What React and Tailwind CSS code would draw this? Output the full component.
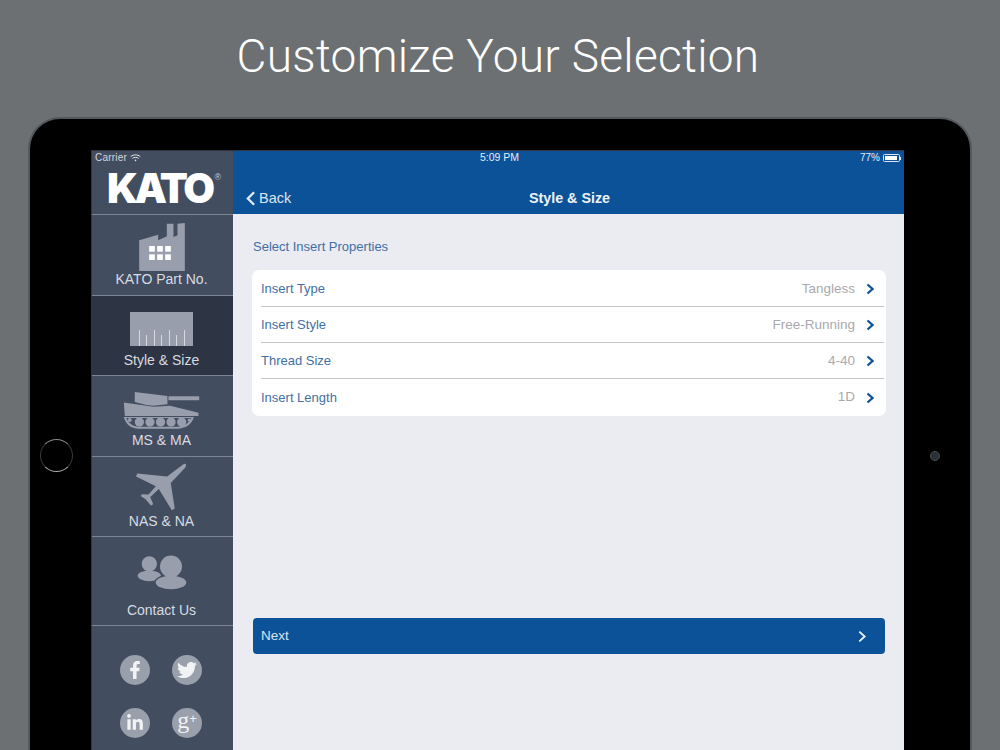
import React from "react";
import { FaFacebookF, FaTwitter, FaLinkedinIn } from "react-icons/fa";

const sans = "font-['Liberation_Sans',Arial,sans-serif]";

const FactoryIcon = () => (
  <svg width="46" height="48" viewBox="415 368 137 144" className="block">
    <path d="M415 512V420L472 403V420L498 408V370H518V410L530 405V370L552 368V512Z" fill="#989eac" />
    <g fill="#ffffff">
      <rect x="445" y="437" width="17" height="17" />
      <rect x="469" y="437" width="17" height="17" />
      <rect x="493" y="437" width="17" height="17" />
      <rect x="445" y="462" width="17" height="17" />
      <rect x="469" y="462" width="17" height="17" />
      <rect x="493" y="462" width="17" height="17" />
    </g>
  </svg>
);

const RulerIcon = () => (
  <svg width="63" height="34" viewBox="0 0 63 34" className="block">
    <rect width="63" height="34" fill="#989eac" />
    <g stroke="#d5d8de" strokeWidth="1">
      <path d="M9.5 34V18M16.5 34V23M24.5 34V18M31.5 34V23M39.5 34V18M46.5 34V23M54.5 34V18" />
    </g>
  </svg>
);

const TankIcon = () => (
  <svg width="77" height="39" viewBox="98 300 232 118" className="block">
    <g fill="#989eac">
      <path d="M133 303L232 315V340L190 345L168 342L133 333Z" />
      <rect x="235" y="316" width="93" height="12" />
      <path d="M100 335L190 348L240 345L326 366V376H103Z" />
      <path d="M100 379H312C306 402 285 414 262 414H145C122 414 106 402 100 379Z" />
    </g>
    <path d="M108 382H304C298 398 280 408 262 408H145C127 408 114 398 108 382Z" fill="#424d60" />
    <g fill="#989eac">
      <circle cx="118" cy="388" r="6" />
      <circle cx="147" cy="394" r="14" />
      <circle cx="179" cy="394" r="14" />
      <circle cx="211" cy="394" r="14" />
      <circle cx="243" cy="394" r="14" />
      <circle cx="275" cy="394" r="14" />
      <circle cx="298" cy="388" r="5" />
    </g>
  </svg>
);

const PlaneIcon = () => (
  <svg width="53" height="50" viewBox="135 25 160 150" className="block">
    <path
      d="M281 31Q293 27 287 41L243 88L255 165L246 170L207 106L181 130L190 152L183 156L167 137L152 127L156 122L176 123L198 98L138 68L142 59L232 68Z"
      fill="#989eac"
    />
  </svg>
);

const PeopleIcon = () => (
  <svg width="52" height="37" viewBox="135 300 156 110" className="block">
    <g fill="#989eac">
      <circle cx="175" cy="329" r="23" />
      <ellipse cx="175" cy="365" rx="35" ry="16" />
    </g>
    <g fill="#424d60" stroke="#424d60" strokeWidth="8">
      <ellipse cx="240" cy="385" rx="46" ry="20" />
      <circle cx="240" cy="337" r="33" />
    </g>
    <g fill="#989eac">
      <ellipse cx="240" cy="385" rx="46" ry="20" />
      <circle cx="240" cy="337" r="33" />
    </g>
  </svg>
);

const navItems = [
  { label: "KATO Part No.", icon: <FactoryIcon />, h: "h-[81px]", pad: "pt-[8px]", gap: "gap-0" },
  { label: "Style & Size", icon: <RulerIcon />, h: "h-[80px]", pad: "pt-[16px]", gap: "gap-[6px]", active: true },
  { label: "MS & MA", icon: <TankIcon />, h: "h-[81px]", pad: "pt-[15px]", gap: "gap-[2px]" },
  { label: "NAS & NA", icon: <PlaneIcon />, h: "h-[80px]", pad: "pt-[5px]", gap: "gap-[1px]" },
  { label: "Contact Us", icon: <PeopleIcon />, h: "h-[89px]", pad: "pt-[17px]", gap: "gap-[11px]" },
];

const rows = [
  { label: "Insert Type", value: "Tangless" },
  { label: "Insert Style", value: "Free-Running" },
  { label: "Thread Size", value: "4-40" },
  { label: "Insert Length", value: "1D" },
];

const Chevron = ({ w = 8, h = 12, color = "#0b5299", sw = 2.2, left = false }) => (
  <svg width={w} height={h} viewBox="0 0 8 12" fill="none" className="block">
    <path d={left ? "M6.5 1L1.5 6L6.5 11" : "M1.5 1.5L6.5 6L1.5 10.5"} stroke={color} strokeWidth={sw} />
  </svg>
);

const SocialCircle = ({ children }) => (
  <div className="w-[30px] h-[30px] rounded-full bg-[#9a9fac] text-[#f2f3f5] flex items-center justify-center">
    {children}
  </div>
);

const Sidebar = () => (
  <aside className="w-[141px] shrink-0 bg-[#424d60] flex flex-col">
    <div className="h-[64px] border-b border-[#7d8595] flex flex-col">
      <div className="h-[13px] pl-[3px] flex items-center gap-[3px] text-[#d5d8de] text-[10px] leading-none">
        <span className="tracking-[0.2px]">Carrier</span>
        <svg width="11" height="8" viewBox="0 0 11 8" fill="none" stroke="#e4e6ea" strokeWidth="1">
          <path d="M0.7 2.6C3.5 0.3 7.5 0.3 10.3 2.6M2.4 4.4C4.2 3 6.8 3 8.6 4.4" />
          <circle cx="5.5" cy="6.4" r="0.8" fill="#e4e6ea" stroke="none" />
        </svg>
      </div>
      <div className="flex justify-center pl-[3px] pt-[4px]">
        <span className="font-['Inter',sans-serif] font-black text-white text-[41px] leading-[40px] tracking-[-3.5px]">KATO</span>
        <span className="text-[#c9ccd2] text-[9px] leading-none ml-[3px] mt-[5px]">®</span>
      </div>
    </div>
    {navItems.map((item) => (
      <div
        key={item.label}
        className={`${item.h} ${item.pad} ${item.gap} ${item.active ? "bg-[#2d3443]" : ""} pr-[2px] border-b border-[#7d8595] flex flex-col items-center`}
      >
        {item.icon}
        <span className="text-[14px] leading-[17px] text-[#d8dbe1]">{item.label}</span>
      </div>
    ))}
    <div className="flex-1 min-h-0 overflow-hidden pl-[28px] pt-[29px]">
      <div className="grid grid-cols-[30px_30px] gap-x-[22px] gap-y-[23px]">
        <SocialCircle><FaFacebookF size={18} /></SocialCircle>
        <SocialCircle><FaTwitter size={20} /></SocialCircle>
        <SocialCircle><FaLinkedinIn size={18} /></SocialCircle>
        <SocialCircle>
          <span className="font-['Liberation_Serif',serif] text-[24px] leading-none -mt-[6px]">g</span>
          <span className="text-[13px] leading-none -mt-[10px]">+</span>
        </SocialCircle>
      </div>
    </div>
  </aside>
);

const NavBar = () => (
  <header className="h-[63px] shrink-0 bg-[#0b5299] flex flex-col text-white">
    <div className="h-[13px] relative flex items-center justify-center pr-[138px] text-[10.5px] leading-none text-[#e6ecf4]">
      <span>5:09 PM</span>
      <div className="absolute right-[3px] top-[2px] flex items-center gap-[2px] text-[10px]">
        <span className="mr-[1px]">77%</span>
        <div className="w-[17px] h-[8px] border border-[#dfe6f0] rounded-[1.5px] p-[1px]">
          <div className="w-[12px] h-full bg-white" />
        </div>
        <div className="w-[1px] h-[3px] bg-[#dfe6f0] -ml-[2px]" />
      </div>
    </div>
    <div className="flex-1 relative flex items-center justify-center pt-[18px]">
      <div className="absolute left-[13px] top-[27px] flex items-center gap-[3px] text-[#dbe5f1] text-[14.5px] leading-none">
        <Chevron w={10} h={15} color="#e3eaf3" sw={1.9} left />
        <span>Back</span>
      </div>
      <span className="font-bold text-[14.3px] leading-none text-[#eef2f7] pl-[2px]">Style &amp; Size</span>
    </div>
  </header>
);

const App = () => (
  <div className={`w-[1000px] h-[750px] overflow-hidden bg-[#6c7072] flex flex-col ${sans}`}>
    <div className="h-[117px] shrink-0 flex justify-center pt-[29px] pr-[4px]">
      <h1 className="font-['Roboto',sans-serif] font-light text-white text-[46px] leading-[54px] tracking-[0.3px]">
        Customize Your Selection
      </h1>
    </div>
    <div className="relative flex-1 min-h-0 mx-[28px] bg-black rounded-t-[32px] border-x-[2px] border-t-[2px] border-[#55585d] pt-[31px] pl-[61px] pr-[66px] flex flex-col">
      <div className="flex-1 min-h-0 flex border-l border-t border-[#33363d]">
        <Sidebar />
        <main className="flex-1 min-w-0 flex flex-col bg-[#ebebf2]">
          <NavBar />
          <div className="flex-1 min-h-0 flex flex-col pl-[19px] pr-[18px] pt-[25px]">
            <p className="text-[13px] leading-[16px] text-[#3f6fa3] pl-[1px]">Select Insert Properties</p>
            <div className="mt-[15px] bg-white rounded-[7px] pt-[1px] pl-[9px] pr-[2px] flex flex-col">
              {rows.map((row, i) => (
                <div
                  key={row.label}
                  className={`flex items-center justify-between pr-[10px] ${i < rows.length - 1 ? "h-[36px] pt-[1px] border-b border-[#c4c4c6]" : "h-[37px]"}`}
                >
                  <span className="text-[13px] text-[#3f6fa3]">{row.label}</span>
                  <div className="flex items-center gap-[11px]">
                    <span className="text-[13.5px] text-[#a9a9ad]">{row.value}</span>
                    <Chevron />
                  </div>
                </div>
              ))}
            </div>
            <button className="mt-[202px] mx-[1px] h-[36px] shrink-0 rounded-[4px] bg-[#0b5299] flex items-center justify-between pl-[8px] pr-[18px] pt-[1px] text-[13.5px] text-[#dbe5f1]">
              <span>Next</span>
              <Chevron w={10} h={13} color="#f2f5f9" sw={1.6} />
            </button>
          </div>
        </main>
      </div>
      {/* home button and camera sit on the bezel */}
      <div className="absolute left-[10px] top-[320px] w-[33px] h-[33px] rounded-full border-[1.5px] border-t-[#8a8a8a] border-b-[#a8a8a8] border-x-[#3a3a3a]" />
      <div className="absolute left-[900px] top-[332px] w-[10px] h-[10px] rounded-full bg-[#2b3038] border border-[#4a4d52]" />
    </div>
  </div>
);

export default App;
